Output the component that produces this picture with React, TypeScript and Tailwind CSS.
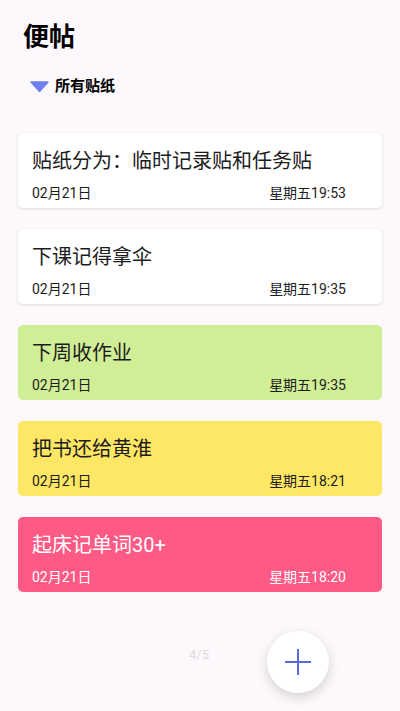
const notes = [
  { title: "贴纸分为：临时记录贴和任务贴", date: "02月21日", time: "星期五19:53", bg: "bg-white shadow-[0_1px_3px_rgba(0,0,0,0.12)]", text: "text-[#1c1c1c]" },
  { title: "下课记得拿伞", date: "02月21日", time: "星期五19:35", bg: "bg-white shadow-[0_1px_3px_rgba(0,0,0,0.12)]", text: "text-[#1c1c1c]" },
  { title: "下周收作业", date: "02月21日", time: "星期五19:35", bg: "bg-[#d0ee96]", text: "text-[#1c1c1c]" },
  { title: "把书还给黄淮", date: "02月21日", time: "星期五18:21", bg: "bg-[#ffe766]", text: "text-[#1c1c1c]" },
  { title: "起床记单词30+", date: "02月21日", time: "星期五18:20", bg: "bg-[#ff5a85]", text: "text-white" },
];

export default function App() {
  return (
    <div
      className="relative h-[711px] w-[400px] overflow-hidden bg-[#fcf8fc]"
      style={{ fontFamily: "Roboto, 'Noto Sans CJK SC', sans-serif" }}
    >
      <header className="px-[23px] pt-[20px]">
        <h1 className="text-[26px] font-bold leading-[34px] text-black">便帖</h1>
        <div className="mt-[23px] flex items-center gap-[6px] pl-[7px]">
          <svg width="19" height="11" viewBox="0 0 19 11" aria-hidden="true">
            <path d="M1 1 H18 L9.5 10.5 Z" fill="#6f7ef0" stroke="#6f7ef0" strokeLinejoin="round" strokeWidth="1.5" />
          </svg>
          <span className="text-[15px] font-bold leading-[18px] text-black">所有贴纸</span>
        </div>
      </header>

      <main className="mt-[38px] flex flex-col gap-[21px] px-[18px]">
        {notes.map((n) => (
          <div key={n.title} className={`h-[75px] rounded-[5px] pl-[14px] pr-[36px] pt-[15px] ${n.bg}`}>
            <p className={`text-[20px] leading-[26px] ${n.text}`}>{n.title}</p>
            <div className={`mt-[11px] flex items-center justify-between text-[14px] leading-[16px] ${n.text}`}>
              <span>{n.date}</span>
              <span>{n.time}</span>
            </div>
          </div>
        ))}
      </main>

      <span className="absolute left-[189px] top-[647px] text-[13px] leading-[16px] text-[#dcdcdc]">4/5</span>

      <button
        type="button"
        className="absolute left-[267px] top-[631px] flex h-[62px] w-[62px] items-center justify-center rounded-full bg-white shadow-[0_4px_12px_rgba(0,0,0,0.16)]"
      >
        <svg width="28" height="28" viewBox="0 0 28 28" aria-hidden="true">
          <path d="M14 1 V27 M1 14 H27" stroke="#5a6ad8" strokeWidth="2" />
        </svg>
      </button>
    </div>
  );
}
